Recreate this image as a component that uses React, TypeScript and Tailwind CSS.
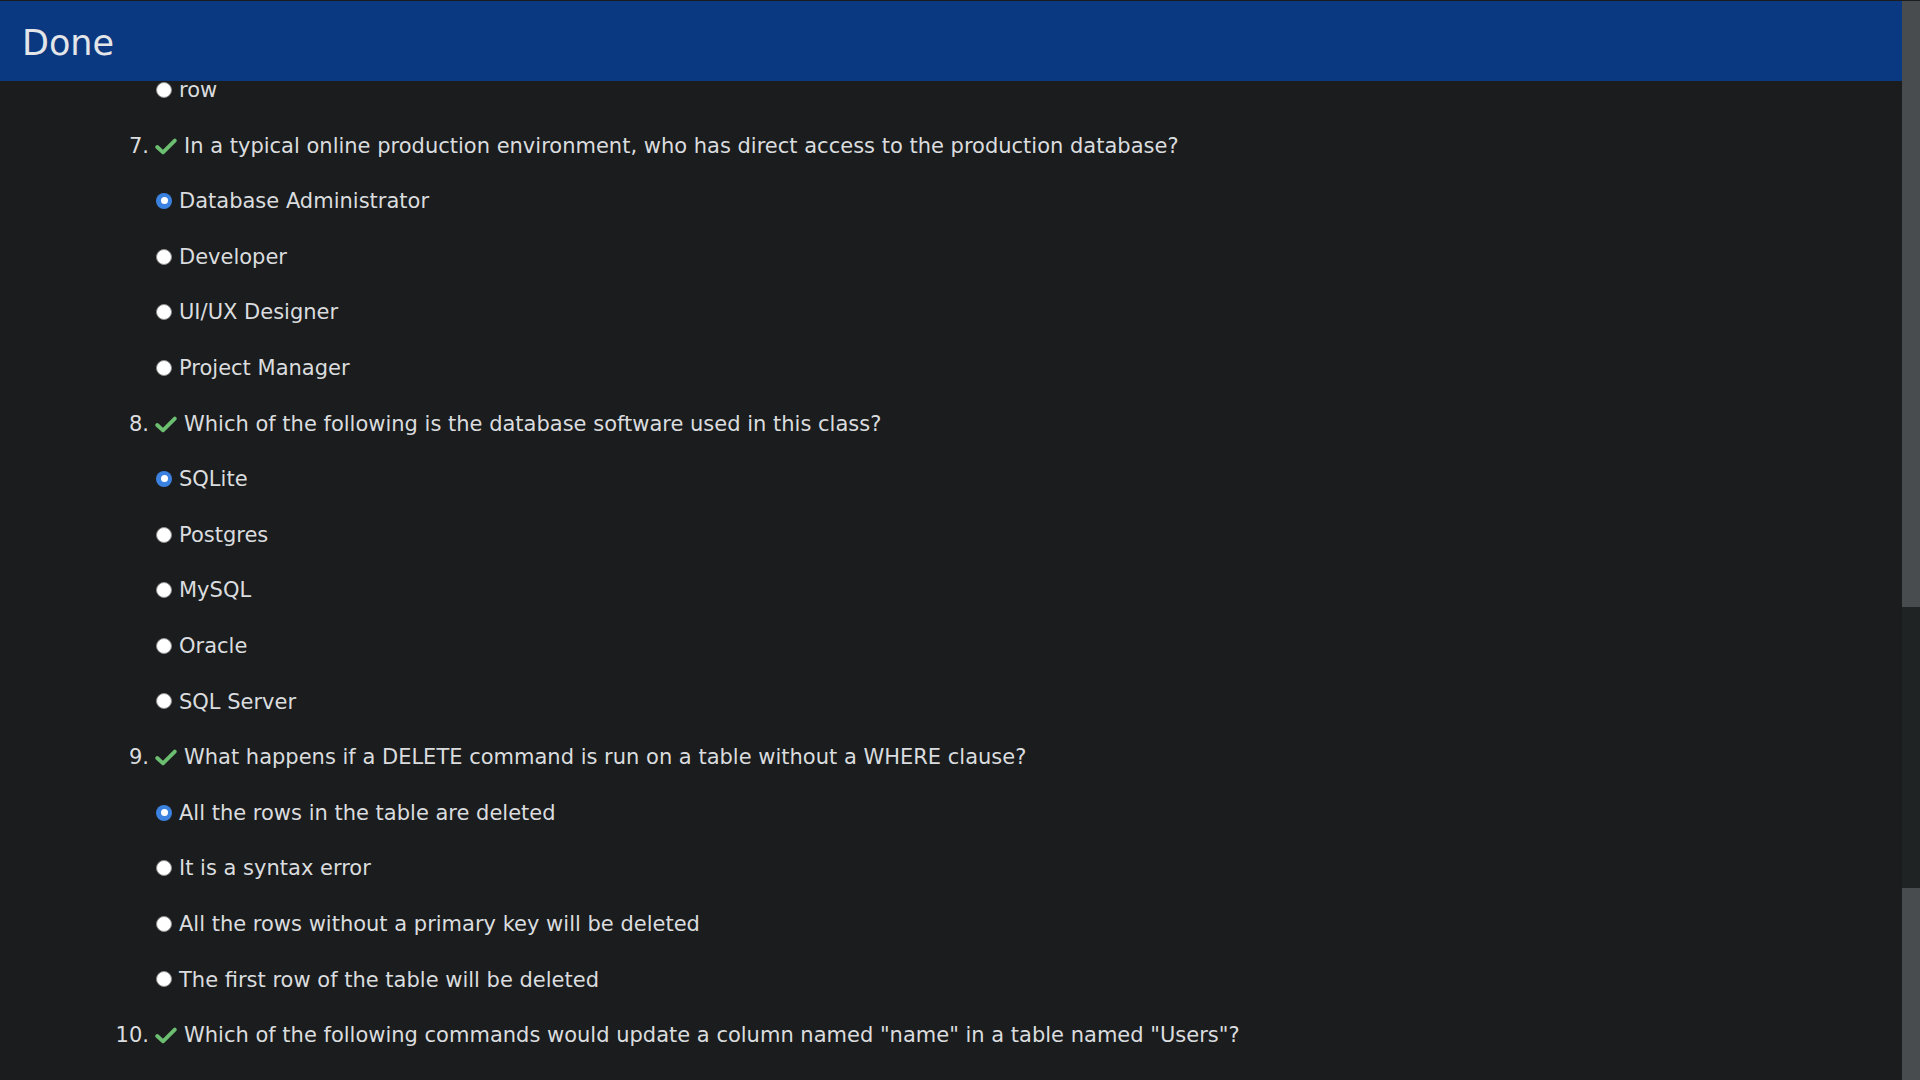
import { Fragment } from 'react';

type Question = {
  n: number;
  text: string;
  options: string[];
  selected: number;
};

const QUESTIONS: Question[] = [
  {
    n: 7,
    text: 'In a typical online production environment, who has direct access to the production database?',
    options: ['Database Administrator', 'Developer', 'UI/UX Designer', 'Project Manager'],
    selected: 0,
  },
  {
    n: 8,
    text: 'Which of the following is the database software used in this class?',
    options: ['SQLite', 'Postgres', 'MySQL', 'Oracle', 'SQL Server'],
    selected: 0,
  },
  {
    n: 9,
    text: 'What happens if a DELETE command is run on a table without a WHERE clause?',
    options: [
      'All the rows in the table are deleted',
      'It is a syntax error',
      'All the rows without a primary key will be deleted',
      'The first row of the table will be deleted',
    ],
    selected: 0,
  },
  {
    n: 10,
    text: 'Which of the following commands would update a column named "name" in a table named "Users"?',
    options: [],
    selected: -1,
  },
];

function Radio({ checked }: { checked: boolean }) {
  if (checked) {
    return (
      <span className="w-[16px] h-[16px] -mt-[2px] rounded-full bg-[#3b82e0] flex items-center justify-center shrink-0">
        <span className="w-[7px] h-[7px] rounded-full bg-white" />
      </span>
    );
  }
  return <span className="w-[16px] h-[16px] -mt-[2px] rounded-full bg-white border border-[#8f8f8f] shrink-0" />;
}

function Check() {
  return (
    <svg width="22" height="17" viewBox="0 0 22 17" className="shrink-0" aria-hidden="true">
      <path d="M2.2 9 L8 14.3 L19.8 2.6" fill="none" stroke="#6cbf70" strokeWidth="3.8" strokeLinecap="round" strokeLinejoin="round" />
    </svg>
  );
}

function OptionRow({ label, checked }: { label: string; checked: boolean }) {
  return (
    <li className="h-[55.6px] flex items-center gap-[7px] pl-[156px]">
      <Radio checked={checked} />
      <span>{label}</span>
    </li>
  );
}

export default function App() {
  return (
    <div
      className="w-[1920px] h-[1080px] overflow-hidden flex bg-[#1b1c1e] text-[#dadcdf] text-[21px]"
      style={{ fontFamily: '"DejaVu Sans", Verdana, sans-serif' }}
    >
      {/* Main area */}
      <div className="relative flex-1 overflow-hidden">
        <ul className="pt-[63px]">
          <OptionRow label="row" checked={false} />
          {QUESTIONS.map((q) => (
            <Fragment key={q.n}>
              <li className="h-[55.6px] flex items-center">
                <span className="w-[149px] text-right">{q.n}.</span>
                <span className="ml-[6px] mr-[7px] flex items-center">
                  <Check />
                </span>
                <span>{q.text}</span>
              </li>
              {q.options.map((o, i) => (
                <OptionRow key={o} label={o} checked={i === q.selected} />
              ))}
            </Fragment>
          ))}
        </ul>

        {/* Fixed header bar */}
        <div className="absolute top-0 left-0 right-0 h-[81px] border-t border-[#1b1c1e] bg-[#0a3881] flex items-center pl-[22px]">
          <span className="text-[35px] text-[#e3e5e8] leading-none mt-[4px]">Done</span>
        </div>
      </div>

      {/* Scrollbar */}
      <div className="w-[18px] flex flex-col border-t border-[#1b1c1e]">
        <div className="h-[606px] bg-[#484c4e]" />
        <div className="h-[281px] bg-[#202324]" />
        <div className="flex-1 bg-[#484c4e]" />
      </div>
    </div>
  );
}
